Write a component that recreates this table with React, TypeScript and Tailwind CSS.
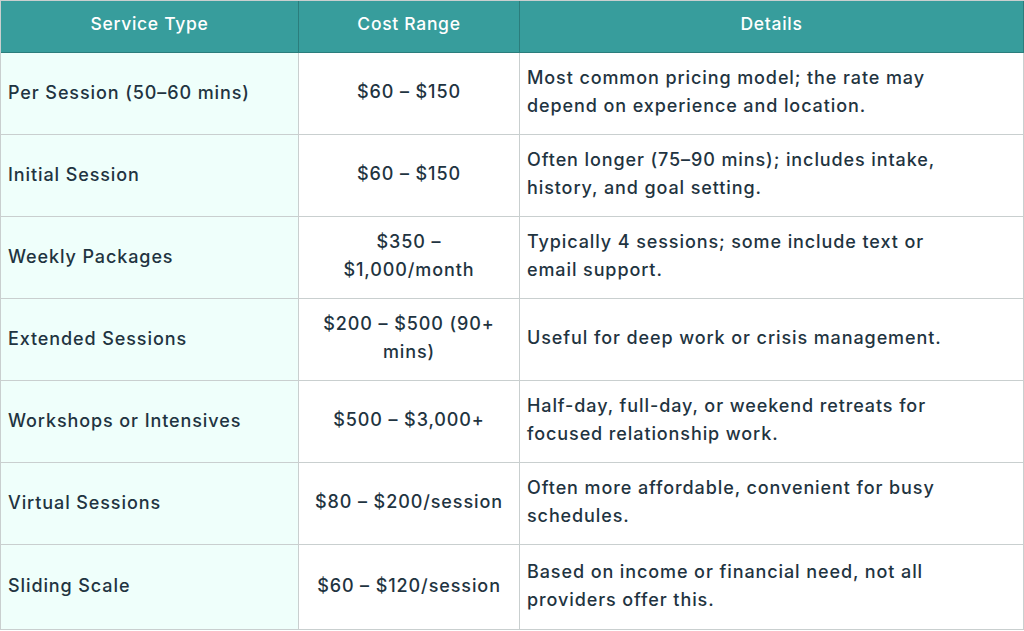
const rows: { service: string; cost: string; details: string }[] = [
  {
    service: "Per Session (50–60 mins)",
    cost: "$60 – $150",
    details: "Most common pricing model; the rate may depend on experience and location.",
  },
  {
    service: "Initial Session",
    cost: "$60 – $150",
    details: "Often longer (75–90 mins); includes intake, history, and goal setting.",
  },
  {
    service: "Weekly Packages",
    cost: "$350 – $1,000/month",
    details: "Typically 4 sessions; some include text or email support.",
  },
  {
    service: "Extended Sessions",
    cost: "$200 – $500 (90+ mins)",
    details: "Useful for deep work or crisis management.",
  },
  {
    service: "Workshops or Intensives",
    cost: "$500 – $3,000+",
    details: "Half-day, full-day, or weekend retreats for focused relationship work.",
  },
  {
    service: "Virtual Sessions",
    cost: "$80 – $200/session",
    details: "Often more affordable, convenient for busy schedules.",
  },
  {
    service: "Sliding Scale",
    cost: "$60 – $120/session",
    details: "Based on income or financial need, not all providers offer this.",
  },
];

export default function App() {
  return (
    <div className="min-h-[631px] w-[1024px] bg-white font-['Inter',sans-serif] text-[#1f3441]">
      <div className="grid grid-cols-[298px_221px_1fr] border-l border-t border-[#c9cfcf]">
        {["Service Type", "Cost Range", "Details"].map((h) => (
          <div
            key={h}
            className="flex h-[52px] items-center justify-center border-b border-r border-[#2b7d7c] bg-[#379d9c] pb-[5px] text-[17.5px] font-medium tracking-[0.04em] text-white"
          >
            {h}
          </div>
        ))}
        {rows.map((r, i) => {
          const h = i === rows.length - 1 ? "h-[85px]" : "h-[82px]";
          return (
            <div key={r.service} className="contents">
              <div
                className={`flex ${h} items-center border-b border-r border-[#c9cfcf] bg-[#effffb] px-[7px] pb-[3px] text-[18px] font-medium tracking-[0.05em]`}
              >
                {r.service}
              </div>
              <div
                className={`flex ${h} items-center justify-center border-b border-r border-[#c9cfcf] px-3 pb-[3px] text-center text-[18px] font-medium leading-[28px] tracking-[0.05em]`}
              >
                {r.cost}
              </div>
              <div
                className={`flex ${h} items-center border-b border-r border-[#c9cfcf] pb-[3px] pl-[7px] pr-[50px] text-[18px] font-medium leading-[28px] tracking-[0.05em]`}
              >
                {r.details}
              </div>
            </div>
          );
        })}
      </div>
    </div>
  );
}
